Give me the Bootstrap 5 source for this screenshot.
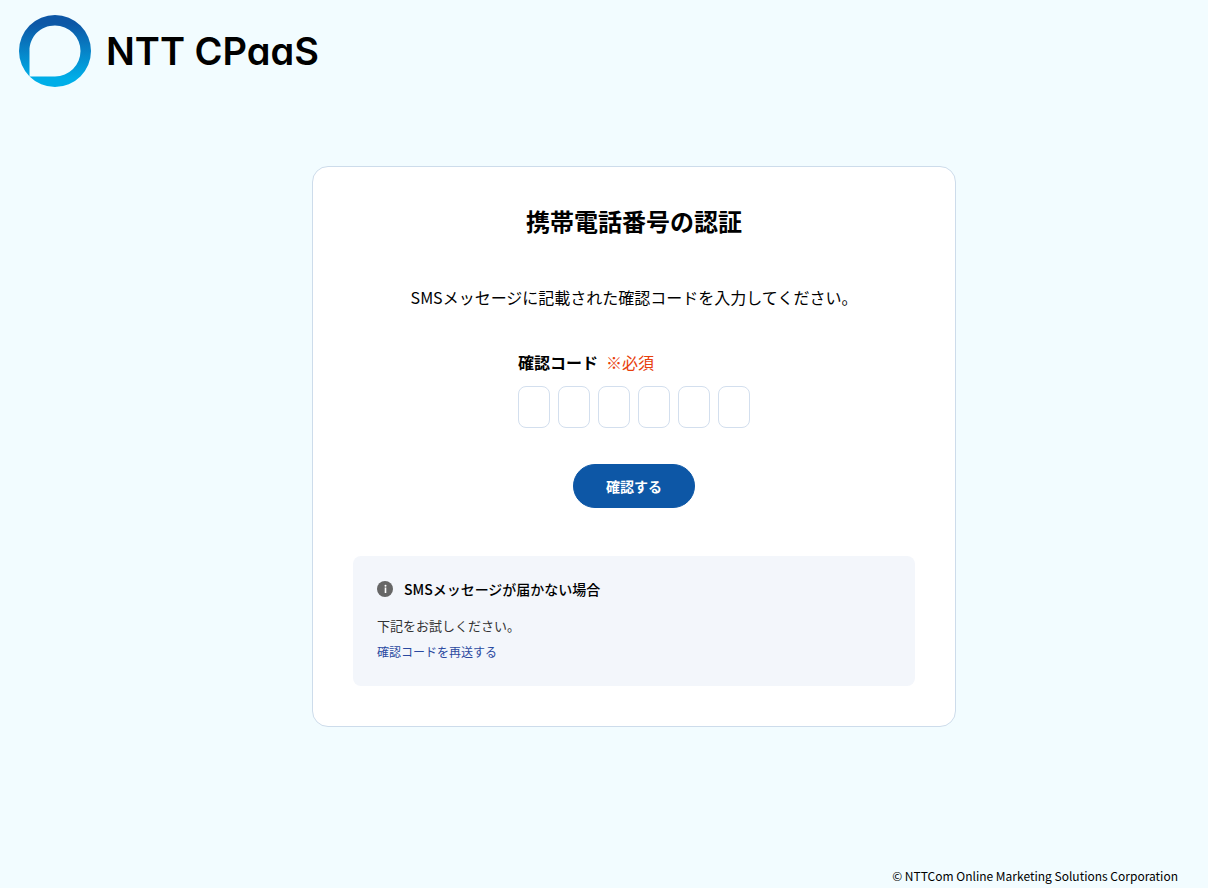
<!DOCTYPE html>
<html lang="ja">
<head>
<meta charset="utf-8">
<meta name="viewport" content="width=device-width, initial-scale=1">
<title>携帯電話番号の認証 | NTT CPaaS</title>
<link href="https://cdn.jsdelivr.net/npm/bootstrap@5.3.0/dist/css/bootstrap.min.css" rel="stylesheet">
<style>
  body { background: #f2fcff; color: #000; font-family: "Noto Sans CJK JP", sans-serif; font-size: 16px; line-height: 24px; }
  .brand { padding: 15px 19px 0; gap: 15px; color: #000; }
  .brand-name { font-family: Inter, sans-serif; font-size: 38px; font-weight: 600; line-height: 72px; font-feature-settings: "cv11"; }
  .page-main { padding: 74px 0 48px 60px; }
  .auth-card { max-width: 644px; padding: 40px; border: 1px solid #cddceb; border-radius: 16px; }
  .auth-title { font-size: 24px; line-height: 28px; font-weight: 700; margin-bottom: 50px; }
  .auth-lead { margin-bottom: 41px; }
  .required { color: #e8400c; }
  .digit { width: 32px; height: 42px; padding: 0; border-color: #d3dfee; border-radius: 8px; }
  .btn-confirm { --bs-btn-bg: #0d57a6; --bs-btn-border-color: #0d57a6; --bs-btn-color: #fff; --bs-btn-hover-bg: #0a478a; --bs-btn-hover-color: #fff; width: 122px; height: 44px; padding: 0; font-size: 14px; font-weight: 700; margin: 36px 0 48px; }
  .help-box { background: #f3f6fb; border-radius: 8px; padding: 24px 24px 20px; }
  .help-title { font-size: 14px; line-height: 18px; font-weight: 500; gap: 11px; margin-bottom: 18px; }
  .help-text { font-size: 13px; line-height: 20px; color: #333; margin-bottom: 6px; }
  .help-link { font-size: 12px; line-height: 20px; color: #2a49a0; }
  .page-foot { font-size: 12px; line-height: 18px; padding: 0 30px 3px; }
</style>
</head>
<body class="d-flex flex-column min-vh-100">
  <header>
    <a href="#" class="brand d-inline-flex align-items-center text-decoration-none">
      <svg width="72" height="72" viewBox="0 0 72 72" aria-hidden="true">
        <defs>
          <linearGradient id="ring" x1="0" y1="0" x2="0" y2="1">
            <stop offset="0.12" stop-color="#0d57a6"/>
            <stop offset="0.88" stop-color="#00aee8"/>
          </linearGradient>
        </defs>
        <path fill="url(#ring)" fill-rule="evenodd" d="M36 0a36 36 0 1 1 0 72a36 36 0 1 1 0-72zM36 10.500C21.500 10.500 10.500 21.500 10.500 36V61.500H36a25.500 25.500 0 0 0 0-51z"/>
      </svg>
      <span class="brand-name">NTT CPaaS</span>
    </a>
  </header>
  <main class="page-main flex-grow-1">
    <section class="auth-card bg-white mx-auto">
      <h1 class="auth-title text-center">携帯電話番号の認証</h1>
      <p class="auth-lead text-center">SMSメッセージに記載された確認コードを入力してください。</p>
      <form class="d-flex flex-column align-items-center">
        <div>
          <div class="d-flex gap-2 mb-2 pb-1">
            <label for="code1" class="fw-bold">確認コード</label>
            <span class="required">※必須</span>
          </div>
          <div class="d-flex gap-2">
            <input id="code1" class="form-control digit text-center" type="text" inputmode="numeric" maxlength="1">
            <input class="form-control digit text-center" type="text" inputmode="numeric" maxlength="1" aria-label="確認コード 2桁目">
            <input class="form-control digit text-center" type="text" inputmode="numeric" maxlength="1" aria-label="確認コード 3桁目">
            <input class="form-control digit text-center" type="text" inputmode="numeric" maxlength="1" aria-label="確認コード 4桁目">
            <input class="form-control digit text-center" type="text" inputmode="numeric" maxlength="1" aria-label="確認コード 5桁目">
            <input class="form-control digit text-center" type="text" inputmode="numeric" maxlength="1" aria-label="確認コード 6桁目">
          </div>
        </div>
        <button type="submit" class="btn btn-confirm rounded-pill">確認する</button>
      </form>
      <div class="help-box">
        <h2 class="help-title d-flex align-items-center">
          <svg width="16" height="16" viewBox="0 0 16 16" aria-hidden="true">
            <circle cx="8" cy="8" r="8" fill="#666"/>
            <circle cx="8.500" cy="4.800" r="1" fill="#fff"/>
            <path d="M7.700 6.500h1.600v5.500H7.700z" fill="#fff"/>
          </svg>
          SMSメッセージが届かない場合
        </h2>
        <p class="help-text">下記をお試しください。</p>
        <a href="#" class="help-link d-inline-block align-top text-decoration-none">確認コードを再送する</a>
      </div>
    </section>
  </main>
  <footer class="page-foot text-end">© NTTCom Online Marketing Solutions Corporation</footer>
  <script src="https://cdn.jsdelivr.net/npm/bootstrap@5.3.0/dist/js/bootstrap.bundle.min.js"></script>
</body>
</html>
